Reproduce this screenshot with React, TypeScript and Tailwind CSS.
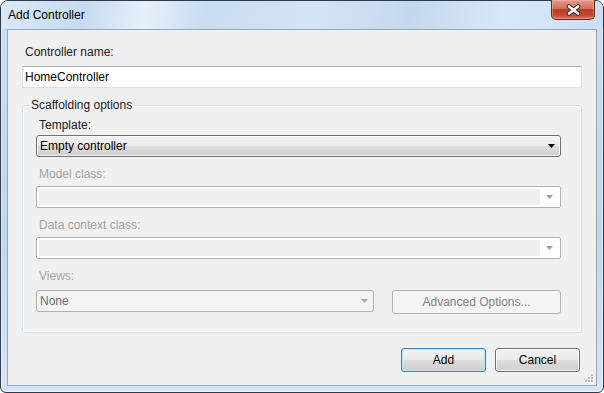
import React from "react";

function ComboArrow({ color }: { color: string }) {
  return (
    <svg width="7" height="4" viewBox="0 0 7 4">
      <path d="M0 0 H7 L3.5 4 Z" fill={color} />
    </svg>
  );
}

function DisabledCombo() {
  return (
    <div className="flex h-[22px] w-full rounded-[2px] border border-[#adb2b5] bg-white p-[2px]">
      <div className="flex-1 bg-[#f0f0f0]" />
      <div className="flex w-[18px] items-center justify-center">
        <ComboArrow color="#a0a0a0" />
      </div>
    </div>
  );
}

function CloseGlyph() {
  return (
    <svg width="15" height="12" viewBox="0 0 15 12">
      <path d="M3 2.5 L12 9.5 M12 2.5 L3 9.5" stroke="#3d2a28" strokeWidth="4.6" strokeLinecap="round" />
      <path d="M3 2.5 L12 9.5 M12 2.5 L3 9.5" stroke="#ffffff" strokeWidth="2.6" strokeLinecap="round" />
    </svg>
  );
}

function Grip() {
  const dots = [
    [6, 0],
    [3, 3],
    [6, 3],
    [0, 6],
    [3, 6],
    [6, 6],
  ];
  return (
    <svg width="9" height="9" viewBox="0 0 9 9" className="absolute bottom-[2px] right-[2px]">
      {dots.map(([x, y], i) => (
        <g key={i}>
          <rect x={x + 1} y={y + 1} width="2" height="2" fill="#ffffff" />
          <rect x={x} y={y} width="2" height="2" fill="#b8bcc2" />
        </g>
      ))}
    </svg>
  );
}

export default function App() {
  return (
    <div className="h-[393px] w-[604px] bg-white font-['Liberation_Sans',Arial,sans-serif] text-[12px] leading-[15px] text-[#1a1a1a]">
      <div className="flex h-full flex-col rounded-t-[8px] rounded-b-[6px] border border-[#2f3a46] bg-[linear-gradient(180deg,#cbdef2_0%,#c0d6ee_60%,#d6e5f6_100%)] shadow-[inset_0_0_0_1px_rgba(255,255,255,0.55)]">
        {/* title bar */}
        <div className="flex h-[28px] items-start rounded-t-[7px] bg-[linear-gradient(100deg,#dbe9f9_0%,#c6daf1_14%,#e6f0fb_24%,#c8dcf2_34%,#d4e4f6_52%,#c3d8ef_68%,#d9e8f8_84%,#cbdef2_100%)]">
          <span className="pl-[7px] pt-[7px] text-black">Add Controller</span>
          <div className="ml-auto mr-[8px] mt-[-1px] flex h-[20px] w-[44px] items-center justify-center rounded-b-[5px] border border-t-0 border-[#5e2a22] bg-[linear-gradient(180deg,#e39a8a_0%,#d2705b_45%,#bb3c24_50%,#c4472d_78%,#d77358_100%)] shadow-[inset_0_0_0_1px_rgba(255,200,190,0.4)]">
            <CloseGlyph />
          </div>
        </div>

        {/* client area */}
        <div className="relative mx-[6px] mb-[6px] flex flex-1 flex-col border border-[#95a7bb] bg-[#f0f0f0] px-[14px] pt-[15px]">
          <div className="pl-[3px]">Controller name:</div>
          <input
            readOnly
            defaultValue="HomeController"
            className="mt-[6px] h-[22px] w-full border border-[#dbdfe6] border-t-[#abadb3] bg-white pl-[2px] text-[12px] text-black outline-none"
          />

          <fieldset className="mt-[10px] rounded-[3px] border border-[#d5dfe5] pb-[18px] pl-[13px] pr-[20px] shadow-[inset_0_0_0_1px_#ffffff]">
            <legend className="ml-[-7px] px-[2px]">Scaffolding options</legend>

            <div className="mt-[5px] pl-[3px]">Template:</div>
            <div className="mt-[2px] flex h-[22px] items-center rounded-[3px] border border-[#707070] bg-[linear-gradient(180deg,#f2f2f2_0%,#ebebeb_49%,#dddddd_50%,#cfcfcf_100%)] shadow-[inset_0_0_0_1px_rgba(255,255,255,0.7)]">
              <span className="flex-1 pl-[3px] text-black">Empty controller</span>
              <div className="flex w-[18px] items-center justify-center">
                <ComboArrow color="#000000" />
              </div>
            </div>

            <div className="mt-[10px] pl-[3px] text-[#a3a3a3]">Model class:</div>
            <div className="mt-[4px]">
              <DisabledCombo />
            </div>

            <div className="mt-[10px] pl-[3px] text-[#a3a3a3]">Data context class:</div>
            <div className="mt-[4px]">
              <DisabledCombo />
            </div>

            <div className="mt-[10px] pl-[3px] text-[#a3a3a3]">Views:</div>
            <div className="mt-[6px] flex items-start">
              <div className="flex h-[22px] w-[338px] items-center rounded-[3px] border border-[#adb2b5] bg-[#f3f3f3]">
                <span className="flex-1 pl-[3px] text-[#6d6d6d]">None</span>
                <div className="flex w-[18px] items-center justify-center">
                  <ComboArrow color="#a8a8a8" />
                </div>
              </div>
              <div className="ml-auto flex h-[24px] w-[169px] items-center justify-center rounded-[3px] border border-[#adb2b5] bg-[#f4f4f4] text-[#838383]">
                Advanced Options...
              </div>
            </div>
          </fieldset>

          <div className="mr-[2px] mt-[15px] flex justify-end gap-[9px]">
            <button className="flex h-[24px] w-[85px] items-center justify-center rounded-[3px] border border-[#3c7fb1] bg-[linear-gradient(180deg,#f2f2f2_0%,#ebebeb_49%,#dddddd_50%,#cfcfcf_100%)] text-black shadow-[inset_0_0_0_1px_#bfe5f8]">
              Add
            </button>
            <button className="flex h-[24px] w-[85px] items-center justify-center rounded-[3px] border border-[#707070] bg-[linear-gradient(180deg,#f2f2f2_0%,#ebebeb_49%,#dddddd_50%,#cfcfcf_100%)] text-black shadow-[inset_0_0_0_1px_rgba(255,255,255,0.75)]">
              Cancel
            </button>
          </div>

          <Grip />
        </div>
      </div>
    </div>
  );
}
